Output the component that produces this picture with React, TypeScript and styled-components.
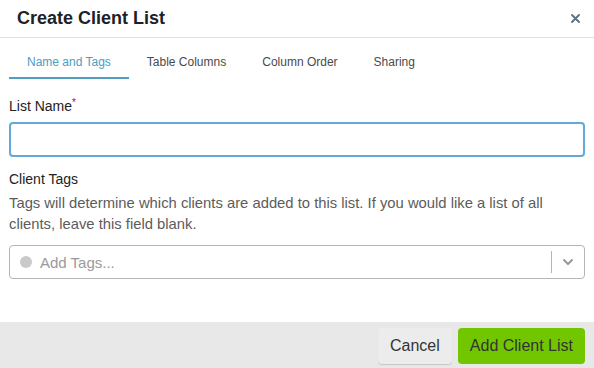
import React from 'react';
import styled, { createGlobalStyle } from 'styled-components';

const GlobalStyle = createGlobalStyle`
  html, body {
    margin: 0;
    padding: 0;
    background: #fff;
  }
  body {
    font-family: "Liberation Sans", Arial, sans-serif;
    color: #222;
  }
  * {
    box-sizing: border-box;
  }
`;

const Dialog = styled.div`
  width: 594px;
  height: 368px;
  display: flex;
  flex-direction: column;
  background: #fff;
`;

const Header = styled.div`
  height: 38px;
  display: flex;
  align-items: center;
  justify-content: space-between;
  padding: 0 14px 1px 17px;
  border-bottom: 1px solid #e1e1e1;
`;

const Title = styled.h1`
  margin: 0;
  font-size: 18px;
  font-weight: bold;
  color: #1d2226;
  line-height: 20px;
`;

const CloseButton = styled.button`
  border: 0;
  background: none;
  padding: 0;
  width: 9px;
  height: 9px;
  display: flex;
  cursor: pointer;
`;

const Tabs = styled.nav`
  display: flex;
  padding: 0 9px;
`;

const Tab = styled.div<{ $active?: boolean }>`
  padding: 17px 18px 8px;
  font-size: 12px;
  line-height: 14px;
  color: ${(p) => (p.$active ? '#4a9dc1' : '#4a4a4a')};
  border-bottom: 2px solid ${(p) => (p.$active ? '#4f9ec2' : 'transparent')};
  cursor: pointer;
`;

const Body = styled.div`
  flex: 1;
  display: flex;
  flex-direction: column;
  padding: 19px 9px 0;
`;

const Label = styled.label<{ $gap?: number }>`
  font-size: 14px;
  line-height: 16px;
  color: #222;
  margin-top: ${(p) => p.$gap ?? 0}px;
`;

const Required = styled.span`
  color: #d0021b;
  font-size: 10px;
  vertical-align: top;
  line-height: 10px;
`;

const TextInput = styled.input`
  margin-top: 8px;
  height: 35px;
  width: 100%;
  border: 2px solid #62a9da;
  border-radius: 4px;
  outline: none;
  padding: 0 10px;
  font: inherit;
  font-size: 15px;
`;

const Help = styled.p`
  margin: 6px 0 0;
  font-size: 14.8px;
  line-height: 21px;
  color: #5c5c5c;
`;

const Select = styled.div`
  margin-top: 10px;
  height: 34px;
  border: 1px solid #b5b5b5;
  border-radius: 4px;
  display: flex;
  align-items: center;
  padding-left: 10px;
`;

const Dot = styled.span`
  width: 12px;
  height: 12px;
  border-radius: 50%;
  background: #cacaca;
  flex: none;
`;

const Placeholder = styled.span`
  flex: 1;
  margin-left: 8px;
  font-size: 15px;
  color: #9a9a9a;
`;

const Separator = styled.span`
  width: 1px;
  height: 22px;
  background: #b5b5b5;
`;

const Chevron = styled.span`
  width: 32px;
  display: flex;
  justify-content: center;
  align-items: center;
`;

const Footer = styled.div`
  height: 46px;
  background: #e8e8e8;
  display: flex;
  justify-content: flex-end;
  align-items: flex-start;
  gap: 6px;
  padding: 6px 9px 0;
`;

const Button = styled.button<{ $primary?: boolean }>`
  height: 36px;
  padding: 0 12px;
  border: 0;
  border-radius: 4px;
  font-family: "Liberation Sans", Arial, sans-serif;
  font-size: 16px;
  color: #333;
  background: ${(p) => (p.$primary ? '#72c600' : '#ececec')};
  box-shadow: ${(p) => (p.$primary ? 'none' : '0 1px 1px rgba(0, 0, 0, 0.15)')};
  cursor: pointer;
`;

const tabs = ['Name and Tags', 'Table Columns', 'Column Order', 'Sharing'];

export default function App() {
  return (
    <Dialog>
      <GlobalStyle />
      <Header>
        <Title>Create Client List</Title>
        <CloseButton aria-label="Close">
          <svg width="9" height="9" viewBox="0 0 9 9">
            <path d="M1 1L8 8M8 1L1 8" stroke="#5b6f82" strokeWidth="1.8" strokeLinecap="round" />
          </svg>
        </CloseButton>
      </Header>
      <Tabs>
        {tabs.map((t, i) => (
          <Tab key={t} $active={i === 0}>
            {t}
          </Tab>
        ))}
      </Tabs>
      <Body>
        <Label>
          List Name<Required>*</Required>
        </Label>
        <TextInput />
        <Label $gap={14}>Client Tags</Label>
        <Help>
          Tags will determine which clients are added to this list. If you would like a list of all
          clients, leave this field blank.
        </Help>
        <Select>
          <Dot />
          <Placeholder>Add Tags...</Placeholder>
          <Separator />
          <Chevron>
            <svg width="12" height="8" viewBox="0 0 12 8">
              <path d="M1.5 1.5L6 6L10.5 1.5" stroke="#999" strokeWidth="2" fill="none" />
            </svg>
          </Chevron>
        </Select>
      </Body>
      <Footer>
        <Button>Cancel</Button>
        <Button $primary>Add Client List</Button>
      </Footer>
    </Dialog>
  );
}
